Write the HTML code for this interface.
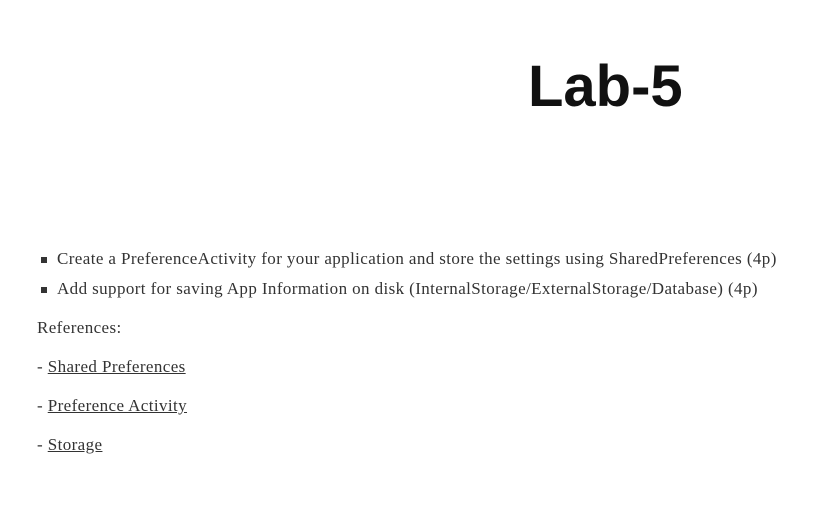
<!DOCTYPE html>
<html><head><style>
body{margin:0;background:#fff;width:825px;height:508px;overflow:hidden;font-family:"Liberation Serif",serif;color:#333;font-size:17px;letter-spacing:0.4px}
h1{position:absolute;left:528px;top:58px;margin:0;font:bold 58px/1 "Liberation Sans",sans-serif;color:#111;letter-spacing:0}
ul{position:absolute;left:37px;top:248px;margin:0;padding:0;list-style:none}
li{position:relative;padding-left:20px;height:30px;line-height:22px}
li:before{content:"";position:absolute;left:4px;top:9px;width:6px;height:6px;background:#333}
p{position:absolute;left:37px;margin:0;line-height:22px}
a{color:#333;text-decoration:underline}
</style></head><body>
<h1>Lab-5</h1>
<ul>
<li>Create a PreferenceActivity for your application and store the settings using SharedPreferences (4p)</li>
<li>Add support for saving App Information on disk (InternalStorage/ExternalStorage/Database) (4p)</li>
</ul>
<p style="top:317px">References:</p>
<p style="top:356px">- <a>Shared Preferences</a></p>
<p style="top:395px">- <a>Preference Activity</a></p>
<p style="top:434px">- <a>Storage</a></p>
</body></html>
